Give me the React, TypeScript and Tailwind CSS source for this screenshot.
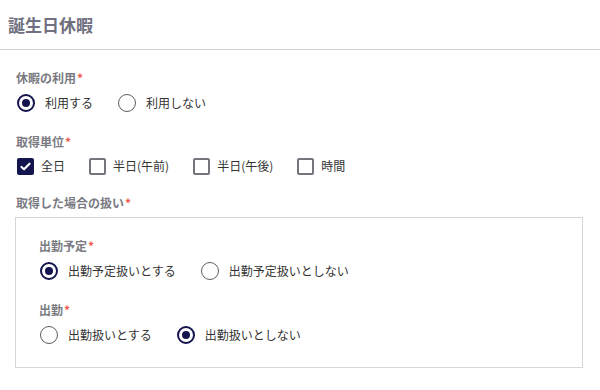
import { useState } from "react";

const font = { fontFamily: '"Noto Sans CJK JP", "Noto Sans", sans-serif' };

function Label({ text }: { text: string }) {
  return (
    <p className="text-[12px] leading-[18px] font-bold text-[#7a7a82]">
      {text}
      <span className="text-[#ee5a4f] ml-[1px]">*</span>
    </p>
  );
}

function Radio({ checked, label, onClick }: { checked: boolean; label: string; onClick: () => void }) {
  return (
    <button type="button" onClick={onClick} className="flex items-center gap-[10px] h-5">
      <span
        className={
          checked
            ? "flex h-[18px] w-[18px] items-center justify-center rounded-full border-2 border-[#14144f]"
            : "flex h-[18px] w-[18px] items-center justify-center rounded-full border-[1.5px] border-[#5e5e66]"
        }
      >
        {checked && <span className="h-[8px] w-[8px] rounded-full bg-[#14144f]" />}
      </span>
      <span className="text-[12px] text-[#333333]">{label}</span>
    </button>
  );
}

function Check({ checked, label, onClick }: { checked: boolean; label: string; onClick: () => void }) {
  return (
    <button type="button" onClick={onClick} className="flex items-center gap-[7px] h-5">
      {checked ? (
        <span className="flex h-[17px] w-[17px] items-center justify-center rounded-[2px] bg-[#14144f]">
          <svg viewBox="0 0 16 16" className="h-[13px] w-[13px]" fill="none" stroke="white" strokeWidth="2.6" strokeLinecap="round" strokeLinejoin="round">
            <path d="M3 8.5l3.2 3L13 4.5" />
          </svg>
        </span>
      ) : (
        <span className="h-[17px] w-[17px] rounded-[2px] border-2 border-[#75757e]" />
      )}
      <span className="text-[12px] text-[#333333]">{label}</span>
    </button>
  );
}

export default function App() {
  const [use, setUse] = useState(true);
  const [units, setUnits] = useState<Record<string, boolean>>({ 全日: true });
  const [plan, setPlan] = useState(true);
  const [work, setWork] = useState(false);

  const toggle = (k: string) => setUnits((u) => ({ ...u, [k]: !u[k] }));

  return (
    <div className="w-[600px] h-[390px] bg-white overflow-hidden" style={font}>
      <div className="h-[50px] border-b border-[#d4d4d8] flex items-center px-2">
        <h1 className="text-[17px] font-bold text-[#70707e]">誕生日休暇</h1>
      </div>

      <div className="pl-4 pr-[17px] pt-[19px]">
        <Label text="休暇の利用" />
        <div className="flex items-center gap-[25px] mt-[6px] ml-[1px]">
          <Radio checked={use} label="利用する" onClick={() => setUse(true)} />
          <Radio checked={!use} label="利用しない" onClick={() => setUse(false)} />
        </div>

        <div className="mt-[20px]">
          <Label text="取得単位" />
        </div>
        <div className="flex items-center gap-[24px] mt-[5px] ml-[1px]">
          {["全日", "半日(午前)", "半日(午後)", "時間"].map((k) => (
            <Check key={k} checked={!!units[k]} label={k} onClick={() => toggle(k)} />
          ))}
        </div>

        <div className="mt-[18px]">
          <Label text="取得した場合の扱い" />
        </div>
        <div className="mt-[5px] -ml-[1px] border border-[#d6d6d8] pl-[23px] pt-[19px] pb-[22px]">
          <Label text="出勤予定" />
          <div className="flex items-center gap-[25px] mt-[6px] ml-[1px]">
            <Radio checked={plan} label="出勤予定扱いとする" onClick={() => setPlan(true)} />
            <Radio checked={!plan} label="出勤予定扱いとしない" onClick={() => setPlan(false)} />
          </div>
          <div className="mt-[20px]">
            <Label text="出勤" />
          </div>
          <div className="flex items-center gap-[25px] mt-[6px] ml-[1px]">
            <Radio checked={work} label="出勤扱いとする" onClick={() => setWork(true)} />
            <Radio checked={!work} label="出勤扱いとしない" onClick={() => setWork(false)} />
          </div>
        </div>
      </div>
    </div>
  );
}
